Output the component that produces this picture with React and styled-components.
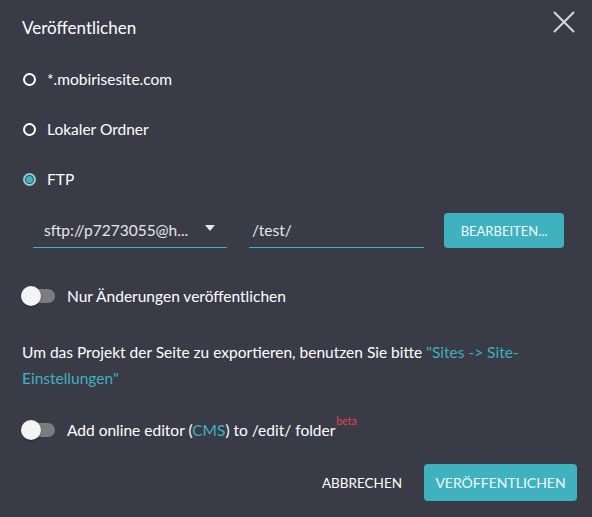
import React, { useState } from "react";
import styled, { createGlobalStyle } from "styled-components";

const GlobalStyle = createGlobalStyle`
  body {
    margin: 0;
    background: #393b47;
    font-family: "Lato", "Noto Sans", sans-serif;
    color: #fff;
  }
`;

const Dialog = styled.div`
  width: 592px;
  height: 517px;
  box-sizing: border-box;
  padding: 0 22px;
  background: #393b47;
  display: flex;
  flex-direction: column;
`;

const Header = styled.div`
  height: 54px;
  display: flex;
  align-items: center;
  justify-content: space-between;
`;

const Title = styled.h2`
  margin: 0;
  font-size: 17px;
  font-weight: 400;
  color: #fff;
`;

const CloseButton = styled.button`
  background: none;
  border: none;
  padding: 0;
  margin: -10px -5px 0 0;
  width: 22px;
  height: 22px;
  cursor: pointer;
  display: flex;
`;

const RadioRow = styled.label`
  height: 50px;
  display: flex;
  align-items: center;
  gap: 11px;
  font-size: 15.5px;
  cursor: pointer;
`;

const RadioDot = styled.span`
  width: 13px;
  height: 13px;
  margin-left: 1px;
  box-sizing: border-box;
  border-radius: 50%;
  border: 2px solid ${(p) => (p.checked ? "#8fcdd5" : "#fff")};
  background: ${(p) => (p.checked ? "#3fb1bf" : "transparent")};
  box-shadow: ${(p) => (p.checked ? "inset 0 0 0 1px #393b47" : "none")};
`;

const FieldsRow = styled.div`
  margin-top: 9px;
  padding-left: 11px;
  display: flex;
  align-items: center;
  height: 35px;
`;

const Select = styled.div`
  width: 194px;
  height: 35px;
  box-sizing: border-box;
  border-bottom: 1px solid #3fb1bf;
  display: flex;
  align-items: center;
  justify-content: space-between;
  padding: 0 12px 0 11px;
  font-size: 15.5px;
  color: #e6e6e6;
`;

const Caret = styled.span`
  width: 0;
  height: 0;
  border-left: 5px solid transparent;
  border-right: 5px solid transparent;
  border-top: 6px solid #e6e6e6;
  margin-top: -4px;
`;

const TextInput = styled.input`
  width: 175px;
  height: 35px;
  box-sizing: border-box;
  margin-left: 22px;
  padding: 0 3px;
  background: transparent;
  border: none;
  border-bottom: 1px solid #3fb1bf;
  color: #e6e6e6;
  font-family: inherit;
  font-size: 15.5px;
  outline: none;
`;

const PrimaryButton = styled.button`
  width: ${(p) => p.w}px;
  height: ${(p) => p.h}px;
  padding: 0;
  margin-left: ${(p) => p.ml || 0}px;
  background: #3fb1bf;
  border: none;
  border-radius: 4px;
  color: #eefafb;
  font-family: inherit;
  font-size: ${(p) => p.fs}px;
  text-transform: uppercase;
  cursor: pointer;
`;

const ToggleRow = styled.label`
  margin-top: ${(p) => p.mt}px;
  height: 36px;
  display: flex;
  align-items: center;
  gap: 12px;
  font-size: 15.5px;
  cursor: pointer;
`;

const Track = styled.span`
  position: relative;
  width: 32px;
  height: 14px;
  margin-left: 1px;
  border-radius: 7px;
  background: ${(p) => (p.on ? "#3fb1bf" : "#7b7b80")};
  &::after {
    content: "";
    position: absolute;
    top: -3px;
    left: ${(p) => (p.on ? "14px" : "-2px")};
    width: 20px;
    height: 20px;
    border-radius: 50%;
    background: #f4f4f4;
    box-shadow: 0 1px 2px rgba(0, 0, 0, 0.4);
  }
`;

const Note = styled.p`
  margin: 25px 0 0;
  font-size: 15.5px;
  line-height: 26px;
  color: #fff;
`;

const Link = styled.span`
  color: #3fb1bf;
`;

const Beta = styled.sup`
  color: #e0474f;
  font-size: 10.5px;
  margin-left: 1px;
  position: relative;
  top: -5px;
`;

const Footer = styled.div`
  margin: 16px -7px 0 0;
  display: flex;
  justify-content: flex-end;
  align-items: center;
  gap: 22px;
`;

const TextButton = styled.button`
  background: none;
  border: none;
  padding: 0;
  color: #fff;
  font-family: inherit;
  font-size: 13.5px;
  text-transform: uppercase;
  cursor: pointer;
`;

const options = ["*.mobirisesite.com", "Lokaler Ordner", "FTP"];

export default function App() {
  const [target, setTarget] = useState("FTP");
  const [onlyChanges, setOnlyChanges] = useState(false);
  const [cms, setCms] = useState(false);

  return (
    <>
      <GlobalStyle />
      <Dialog>
        <Header>
          <Title>Veröffentlichen</Title>
          <CloseButton aria-label="close">
            <svg width="22" height="22" viewBox="0 0 22 22">
              <path d="M1 1 L21 21 M21 1 L1 21" stroke="#d8d8dc" strokeWidth="2" />
            </svg>
          </CloseButton>
        </Header>
        {options.map((o) => (
          <RadioRow key={o} onClick={() => setTarget(o)}>
            <RadioDot checked={target === o} />
            {o}
          </RadioRow>
        ))}
        <FieldsRow>
          <Select>
            sftp://p7273055@h...
            <Caret />
          </Select>
          <TextInput defaultValue="/test/" />
          <PrimaryButton ml={20} w={120} h={35} fs={13}>
            Bearbeiten...
          </PrimaryButton>
        </FieldsRow>
        <ToggleRow mt={30} onClick={() => setOnlyChanges(!onlyChanges)}>
          <Track on={onlyChanges} />
          Nur Änderungen veröffentlichen
        </ToggleRow>
        <Note>
          Um das Projekt der Seite zu exportieren, benutzen Sie bitte{" "}
          <Link>"Sites -&gt; Site-</Link>
          <Link>Einstellungen"</Link>
        </Note>
        <ToggleRow mt={21} onClick={() => setCms(!cms)}>
          <Track on={cms} />
          <span>
            Add online editor (<Link>CMS</Link>) to /edit/ folder
            <Beta>beta</Beta>
          </span>
        </ToggleRow>
        <Footer>
          <TextButton>Abbrechen</TextButton>
          <PrimaryButton w={153} h={37} fs={14}>
            Veröffentlichen
          </PrimaryButton>
        </Footer>
      </Dialog>
    </>
  );
}
